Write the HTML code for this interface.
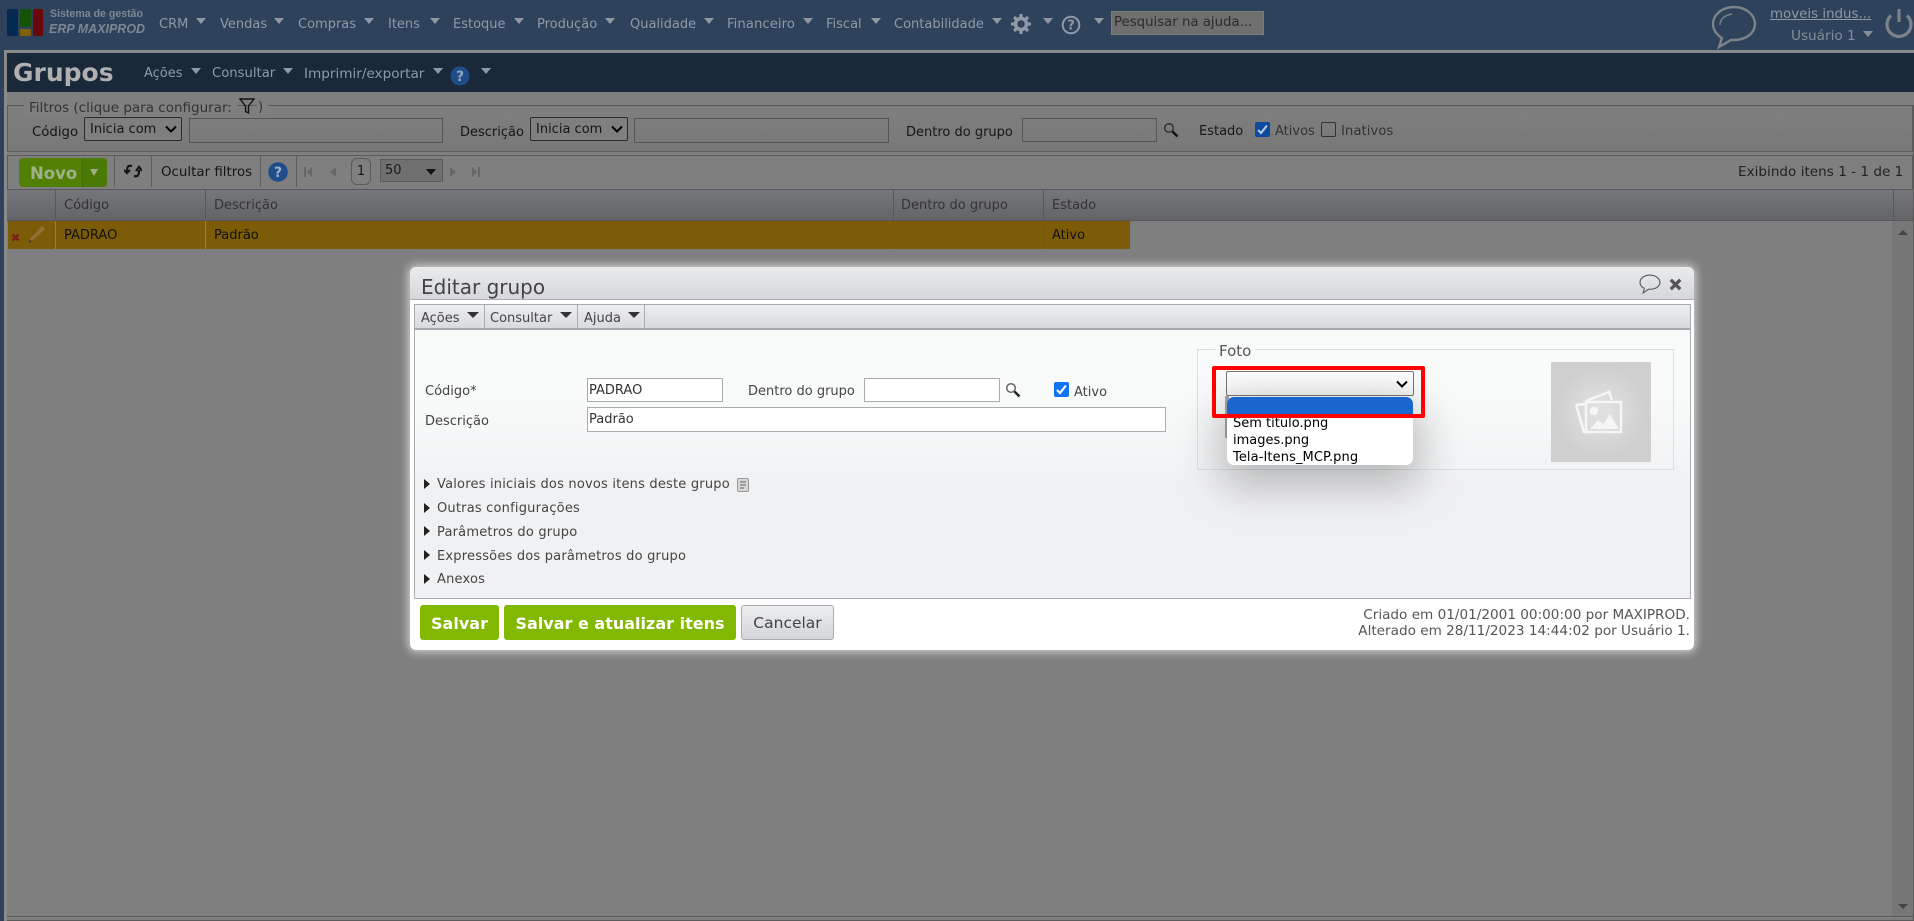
<!DOCTYPE html>
<html lang="pt-BR"><head><meta charset="utf-8"><title>Grupos</title>
<style>
html,body{margin:0;padding:0;width:1914px;height:921px;overflow:hidden;background:#7f7f7f;}
body{position:relative;font-family:"DejaVu Sans","Liberation Sans",sans-serif;font-size:13px;color:#161616;}
div,span,svg{position:absolute;}
.t{white-space:nowrap;line-height:18px;height:18px;margin-top:1px;}
.m{color:#8f99a5;font-size:13px;}
.a{width:0;height:0;border-left:5px solid transparent;border-right:5px solid transparent;border-top:6px solid #8f99a5;}
.d{width:0;height:0;border-left:6px solid transparent;border-right:6px solid transparent;border-top:6px solid #333;}
.box{box-sizing:border-box;border:1px solid #555;}
.sel{box-sizing:border-box;border:1px solid #2c2c2c;border-radius:2px;background:#7f7f7f;}
.sep{width:1px;background:#5e5e5e;}
.col{width:1px;background:#55585c;}
.di{box-sizing:border-box;border:1px solid #a9adb1;background:#fff;}
.dt{color:#444;}
.sec{letter-spacing:.2px;}
.ra{width:0;height:0;border-top:5px solid transparent;border-bottom:5px solid transparent;border-left:6px solid #222;}
.g{box-sizing:border-box;background:#82b900;border-radius:3px;color:#fff;font-weight:bold;font-size:16px;text-align:center;line-height:37px;}
</style></head>
<body>
<!-- top bar -->
<div style="left:0;top:0;width:1914px;height:50px;background:#2e425c"></div>
<div style="left:0;top:50px;width:4px;height:871px;background:#2e425c"></div>
<div style="left:4px;top:50px;width:1910px;height:3px;background:#8a8a8a"></div>
<div style="left:4px;top:50px;width:3px;height:871px;background:#8a8a8a"></div>
<div style="left:7px;top:9px;width:11px;height:27px;background:#042a52;border-radius:2px"></div>
<div style="left:20px;top:9px;width:11px;height:18px;background:#145205;border-radius:2px"></div>
<div style="left:20px;top:29px;width:11px;height:7px;background:#80600a;border-radius:1px"></div>
<div style="left:33px;top:9px;width:10px;height:27px;background:#690808;border-radius:2px"></div>
<div class="t" style="left:50px;top:4px;font:bold 10.6px/18px 'Liberation Sans',sans-serif;color:#7d8794">Sistema de gestão</div>
<div class="t" style="left:49px;top:19px;font:italic bold 12.5px/18px 'Liberation Sans',sans-serif;color:#7d8794">ERP MAXIPROD</div>
<div class="t m" style="left:159px;top:15px">CRM</div><div class="a" style="left:196px;top:18px"></div>
<div class="t m" style="left:220px;top:15px">Vendas</div><div class="a" style="left:274px;top:18px"></div>
<div class="t m" style="left:298px;top:15px">Compras</div><div class="a" style="left:364px;top:18px"></div>
<div class="t m" style="left:388px;top:15px">Itens</div><div class="a" style="left:430px;top:18px"></div>
<div class="t m" style="left:453px;top:15px">Estoque</div><div class="a" style="left:514px;top:18px"></div>
<div class="t m" style="left:537px;top:15px">Produção</div><div class="a" style="left:605px;top:18px"></div>
<div class="t m" style="left:630px;top:15px">Qualidade</div><div class="a" style="left:704px;top:18px"></div>
<div class="t m" style="left:727px;top:15px;font-size:13.3px">Financeiro</div><div class="a" style="left:803px;top:18px"></div>
<div class="t m" style="left:826px;top:15px">Fiscal</div><div class="a" style="left:871px;top:18px"></div>
<div class="t m" style="left:894px;top:15px">Contabilidade</div><div class="a" style="left:992px;top:18px"></div>
<svg style="left:1011px;top:14px" width="20" height="20" viewBox="0 0 20 20"><circle cx="10" cy="10" r="5.5" fill="none" stroke="#8f99a5" stroke-width="3.5"/><path d="M10 0v4M10 16v4M0 10h4M16 10h4M3 3l3 3M14 14l3 3M17 3l-3 3M6 14l-3 3" stroke="#8f99a5" stroke-width="3.2"/></svg>
<div class="a" style="left:1043px;top:18px"></div>
<svg style="left:1061px;top:15px" width="20" height="20" viewBox="0 0 20 20"><circle cx="10" cy="10" r="8.3" fill="none" stroke="#8f99a5" stroke-width="2"/><text x="10" y="14.5" font-size="13" font-weight="bold" text-anchor="middle" fill="#8f99a5" font-family="DejaVu Sans">?</text></svg>
<div class="a" style="left:1094px;top:18px"></div>
<div class="t" style="left:1111px;top:10px;width:153px;height:24px;box-sizing:border-box;background:#6f6f6f;border:1px solid #7c7c7c;color:#2e2a28;line-height:22px;padding-left:2px;font-size:13.3px">Pesquisar na ajuda...</div>
<svg style="left:1711px;top:5px" width="46" height="50" viewBox="0 0 46 50"><path d="M23 2C11 2 2 10 2 19c0 6 4 11 9 14l-3 9 12-7c1 0 2 0 3 0 12 0 21-7 21-16S35 2 23 2z" fill="none" stroke="#7d838a" stroke-width="2.4"/><path d="M9 20c0-6 5-10 12-11" fill="none" stroke="#7d838a" stroke-width="1.4"/></svg>
<div class="t m" style="left:1770px;top:5px;text-decoration:underline;font-size:13.4px">moveis indus...</div>
<div class="t m" style="left:1791px;top:26px;color:#858f9b;font-size:13.6px">Usuário 1</div><div class="a" style="left:1863px;top:31px;border-top-color:#858f9b"></div>
<svg style="left:1884px;top:8px" width="30" height="30" viewBox="0 0 30 30"><path d="M7 7.5a12 12 0 1 0 16 0" fill="none" stroke="#7d838a" stroke-width="3.2"/><path d="M15 1v13" stroke="#7d838a" stroke-width="3.2"/></svg>

<!-- title bar -->
<div style="left:7px;top:53px;width:1907px;height:39px;background:#19293a"></div>
<div class="t" style="left:13px;top:57px;height:30px;line-height:30px;font-size:25px;font-weight:bold;color:#b0b0b0">Grupos</div>
<div class="t m" style="left:144px;top:64px">Ações</div><div class="a" style="left:191px;top:68px"></div>
<div class="t m" style="left:212px;top:64px;font-size:13.2px">Consultar</div><div class="a" style="left:283px;top:68px"></div>
<div class="t m" style="left:304px;top:64px;font-size:13.6px">Imprimir/exportar</div><div class="a" style="left:433px;top:68px"></div>
<svg style="left:450px;top:66px" width="20" height="20" viewBox="0 0 20 20"><circle cx="10" cy="10" r="9.5" fill="#1f4d8a"/><text x="10" y="15" font-size="14" font-weight="bold" text-anchor="middle" fill="#8fa5c2" font-family="DejaVu Sans">?</text></svg>
<div class="a" style="left:481px;top:68px"></div>

<!-- filters -->
<div class="box" style="left:7px;top:105px;width:1906px;height:47px;border-color:#5b5b5b;background:linear-gradient(#7f7f7f,#787878)"></div>
<div class="t" style="left:24px;top:98px;background:#7f7f7f;padding:0 5px;color:#333;font-size:13.5px">Filtros (clique para configurar:</div>
<svg style="left:239px;top:98px" width="16" height="16" viewBox="0 0 16 16"><path d="M1 1h14L9.5 8v7l-3-1.500V8z" fill="none" stroke="#111" stroke-width="1.4"/></svg>
<div class="t" style="left:257px;top:98px;background:#7f7f7f;padding:0 5px 0 1px;color:#333">)</div>
<div class="t" style="left:32px;top:123px;font-size:13.3px">Código</div>
<div class="sel" style="left:84px;top:117px;width:98px;height:24px"></div>
<div class="t" style="left:90px;top:120px">Inicia com</div>
<svg style="left:164px;top:125px" width="14" height="9" viewBox="0 0 14 9"><path d="M2 1.500l5 5 5-5" fill="none" stroke="#000" stroke-width="2"/></svg>
<div class="box" style="left:189px;top:118px;width:254px;height:25px"></div>
<div class="t" style="left:460px;top:123px">Descrição</div>
<div class="sel" style="left:530px;top:117px;width:98px;height:24px"></div>
<div class="t" style="left:536px;top:120px">Inicia com</div>
<svg style="left:610px;top:125px" width="14" height="9" viewBox="0 0 14 9"><path d="M2 1.500l5 5 5-5" fill="none" stroke="#000" stroke-width="2"/></svg>
<div class="box" style="left:634px;top:118px;width:255px;height:25px"></div>
<div class="t" style="left:906px;top:123px">Dentro do grupo</div>
<div class="box" style="left:1022px;top:118px;width:135px;height:24px"></div>
<svg style="left:1163px;top:122px" width="16" height="16" viewBox="0 0 16 16"><circle cx="6" cy="6" r="4.300" fill="none" stroke="#333" stroke-width="1.500"/><path d="M9.500 9.500l5 5" stroke="#111" stroke-width="2.400"/></svg>
<div class="t" style="left:1199px;top:122px">Estado</div>
<div style="left:1255px;top:122px;width:15px;height:15px;background:#0b4a9c;border-radius:2px"></div>
<svg style="left:1255px;top:122px" width="15" height="15" viewBox="0 0 15 15"><path d="M3 8l3 3 6-7.500" fill="none" stroke="#b5c8de" stroke-width="2.200"/></svg>
<div class="t" style="left:1275px;top:122px;color:#333">Ativos</div>
<div style="left:1321px;top:122px;width:13px;height:13px;border:1px solid #333;border-radius:2px"></div>
<div class="t" style="left:1341px;top:122px;color:#333;font-size:13.3px">Inativos</div>

<!-- toolbar -->
<div class="box" style="left:7px;top:155px;width:1906px;height:35px;border-color:#5b5b5b;border-bottom:0"></div>
<div style="left:19px;top:158px;width:88px;height:29px;background:#528005;border-radius:4px"></div>
<div style="left:82px;top:158px;width:25px;height:29px;background:#4a7a06;border-left:1px solid #426d04;box-sizing:border-box;border-radius:0 4px 4px 0"></div>
<div class="t" style="left:30px;top:161px;height:24px;line-height:24px;font-size:16.5px;font-weight:bold;color:#a0b08c">Novo</div>
<div style="left:90px;top:169px;width:0;height:0;border-left:4px solid transparent;border-right:4px solid transparent;border-top:7px solid #a0b08c"></div>
<div class="sep" style="left:114px;top:156px;height:31px"></div>
<svg style="left:124px;top:163px" width="18" height="16" viewBox="0 0 18 16"><path d="M8 3C4 2 3 4 3 9M0 7l3 3 3-3M10 13c4 1 5-1 5-6M12 8l3-4 3 4" fill="none" stroke="#161616" stroke-width="2.200"/></svg>
<div class="sep" style="left:151px;top:156px;height:31px"></div>
<div class="t" style="left:161px;top:163px;font-size:13.4px">Ocultar filtros</div>
<div class="sep" style="left:260px;top:156px;height:31px"></div>
<svg style="left:268px;top:162px" width="20" height="20" viewBox="0 0 20 20"><circle cx="10" cy="10" r="9.800" fill="#1f4d8a"/><text x="10" y="15" font-size="14" font-weight="bold" text-anchor="middle" fill="#9db0c8" font-family="DejaVu Sans">?</text></svg>
<div class="sep" style="left:296px;top:156px;height:31px"></div>
<svg style="left:304px;top:166px" width="176" height="12" viewBox="0 0 176 12" fill="#666"><path d="M0 1h2v10H0zM8 1v10L3 6zM32 1v10l-6-5zM146 1v10l6-5zM168 1v10l5-5zM174 1h2v10h-2z"/></svg>
<div class="t" style="left:351px;top:157px;width:20px;height:27px;box-sizing:border-box;border:1px solid #5b5b5b;border-radius:6px;text-align:center;line-height:25px">1</div>
<div class="t" style="left:380px;top:158px;width:63px;height:23px;box-sizing:border-box;border:1px solid #5b5b5b;background:#707070;line-height:22px;padding-left:4px;color:#1a1a1a">50</div>
<div style="left:426px;top:169px;width:0;height:0;border-left:5px solid transparent;border-right:5px solid transparent;border-top:6px solid #111"></div>
<div class="t" style="left:1738px;top:162px;color:#222;font-size:13.6px">Exibindo itens 1 - 1 de 1</div>

<!-- grid -->
<div style="left:7px;top:189px;width:1906px;height:32px;background:linear-gradient(#75777a,#626467);border-top:1px solid #55585c;border-bottom:1px solid #55585c;box-sizing:border-box"></div>
<div class="col" style="left:55px;top:189px;height:60px"></div>
<div class="col" style="left:205px;top:189px;height:60px"></div>
<div class="col" style="left:893px;top:189px;height:60px"></div>
<div class="col" style="left:1043px;top:189px;height:60px"></div>
<div class="col" style="left:1893px;top:189px;height:32px"></div>
<div class="t" style="left:64px;top:196px;color:#333">Código</div>
<div class="t" style="left:214px;top:196px;color:#333">Descrição</div>
<div class="t" style="left:901px;top:196px;color:#333">Dentro do grupo</div>
<div class="t" style="left:1052px;top:196px;color:#333">Estado</div>
<div style="left:8px;top:221px;width:1122px;height:28px;background:#7d5c07"></div>
<div class="col" style="left:55px;top:221px;height:28px;background:#8a8060"></div>
<div class="col" style="left:205px;top:221px;height:28px;background:#8a8060"></div>
<div class="col" style="left:893px;top:221px;height:28px;background:#6d5a22"></div>
<div class="col" style="left:1043px;top:221px;height:28px;background:#6d5a22"></div>
<svg style="left:11px;top:233px" width="9" height="9" viewBox="0 0 9 9"><path d="M1.500 1.500l6 6M7.500 1.500l-6 6" stroke="#7a1f1a" stroke-width="2.400"/></svg>
<svg style="left:27px;top:225px" width="20" height="20" viewBox="0 0 20 20"><path d="M2 18l2-5L15 1l3 3L6 15z" fill="#97703a"/><path d="M2 18l1-3 2 1z" fill="#333"/></svg>
<div class="t" style="left:64px;top:226px;color:#111">PADRAO</div>
<div class="t" style="left:214px;top:226px;color:#111">Padrão</div>
<div class="t" style="left:1052px;top:226px;color:#111">Ativo</div>
<div style="left:1892px;top:221px;width:21px;height:695px;background:#777"></div>
<div style="left:1898px;top:230px;width:0;height:0;border-left:5px solid transparent;border-right:5px solid transparent;border-bottom:5px solid #444"></div>
<div style="left:1898px;top:904px;width:0;height:0;border-left:5px solid transparent;border-right:5px solid transparent;border-top:5px solid #444"></div>
<div style="left:7px;top:916px;width:1907px;height:1px;background:#5b5b5b"></div>
<div style="left:7px;top:920px;width:1907px;height:1px;background:#5b5b5b"></div>
<div style="left:1913px;top:105px;width:1px;height:816px;background:#5b5b5b"></div>

<!-- dialog -->
<div style="left:410px;top:267px;width:1284px;height:383px;background:#fff;border-radius:6px;box-shadow:0 0 9px 2px rgba(255,255,255,.65)"></div>
<div style="left:410px;top:267px;width:1284px;height:33px;box-sizing:border-box;background:linear-gradient(#e9ebed,#d5d7da);border-bottom:1px solid #a9adb3;border-radius:6px 6px 0 0"></div>
<div class="t" style="left:421px;top:273px;height:26px;line-height:26px;font-size:20px;color:#444">Editar grupo</div>
<svg style="left:1639px;top:274px" width="22" height="20" viewBox="0 0 21 19"><path d="M10.500 1C5 1 1 4 1 8c0 2.500 1.600 4.500 4 5.600L4 18l5-3.500h1.500C16 14.500 20 11.500 20 8s-4-7-9.500-7z" fill="none" stroke="#666" stroke-width="1.200"/></svg>
<svg style="left:1669px;top:278px" width="13" height="13" viewBox="0 0 11 11"><path d="M1.500 1.500l8 8M9.500 1.500l-8 8" stroke="#555" stroke-width="2.800"/></svg>
<!-- dialog body -->
<div style="left:414px;top:304px;width:1277px;height:295px;box-sizing:border-box;border:1px solid #a9adb3;background:linear-gradient(#f9fbfb 30%,#f0f1f3 62%)"></div>
<div style="left:415px;top:305px;width:1275px;height:25px;box-sizing:border-box;background:linear-gradient(#eceef0,#d8dadd);border-bottom:2px solid #a3a8ac"></div>
<div class="col" style="left:484px;top:305px;height:24px;background:#a9adb3"></div>
<div class="col" style="left:577px;top:305px;height:24px;background:#a9adb3"></div>
<div class="col" style="left:644px;top:305px;height:24px;background:#a9adb3"></div>
<div class="t dt" style="left:421px;top:309px">Ações</div><div class="d" style="left:467px;top:312px;border-top-color:#333"></div>
<div class="t dt" style="left:490px;top:309px">Consultar</div><div class="d" style="left:560px;top:312px"></div>
<div class="t dt" style="left:584px;top:309px">Ajuda</div><div class="d" style="left:628px;top:312px"></div>

<div class="t dt" style="left:425px;top:382px">Código*</div>
<div class="di t" style="left:587px;top:378px;width:136px;height:24px;line-height:24px;padding-left:1px;color:#333;margin-top:0">PADRAO</div>
<div class="t dt" style="left:748px;top:382px">Dentro do grupo</div>
<div class="di" style="left:864px;top:378px;width:136px;height:24px"></div>
<svg style="left:1005px;top:382px" width="16" height="16" viewBox="0 0 16 16"><circle cx="6" cy="6" r="4.300" fill="#fff" stroke="#666" stroke-width="1.500"/><path d="M9.500 9.500l5 5" stroke="#222" stroke-width="2.400"/></svg>
<div style="left:1054px;top:382px;width:15px;height:15px;background:#0f74f2;border-radius:2px"></div>
<svg style="left:1054px;top:382px" width="15" height="15" viewBox="0 0 15 15"><path d="M3 8l3 3 6-7.500" fill="none" stroke="#fff" stroke-width="2.200"/></svg>
<div class="t dt" style="left:1074px;top:383px">Ativo</div>
<div class="t dt" style="left:425px;top:412px">Descrição</div>
<div class="di t" style="left:587px;top:407px;width:579px;height:25px;line-height:23px;padding-left:1px;color:#333;margin-top:0">Padrão</div>

<div class="ra" style="left:424px;top:479px"></div><div class="t dt sec" style="left:437px;top:475px">Valores iniciais dos novos itens deste grupo</div>
<svg style="left:737px;top:478px" width="12" height="14" viewBox="0 0 12 14"><rect x=".5" y=".5" width="11" height="13" rx="1.500" fill="#d5d6d8" stroke="#999"/><path d="M3 4h6M3 7h6M3 10h4" stroke="#666"/></svg>
<div class="ra" style="left:424px;top:503px"></div><div class="t dt sec" style="left:437px;top:499px">Outras configurações</div>
<div class="ra" style="left:424px;top:526px"></div><div class="t dt sec" style="left:437px;top:523px">Parâmetros do grupo</div>
<div class="ra" style="left:424px;top:550px"></div><div class="t dt sec" style="left:437px;top:547px">Expressões dos parâmetros do grupo</div>
<div class="ra" style="left:424px;top:574px"></div><div class="t dt sec" style="left:437px;top:570px">Anexos</div>

<!-- foto -->
<div style="left:1197px;top:349px;width:477px;height:121px;box-sizing:border-box;border:1px solid #dcdfe0"></div>
<div class="t" style="left:1215px;top:341px;background:#f8fafa;padding:0 4px;font-size:15px;color:#555">Foto</div>
<div style="left:1551px;top:362px;width:100px;height:100px;background:radial-gradient(circle,#e0e0e0 10%,#cfcfcf 65%)"></div>
<svg style="left:1573px;top:389px" width="50" height="46" viewBox="0 0 50 46" fill="none" stroke="#f6f6f6" stroke-width="2.500"><path d="M13 12L36 3l3 8M3 16l8 27h5"/><path d="M13 15l-10 1"/><rect x="13" y="13" width="35" height="30"/><circle cx="21" cy="22" r="3" fill="#f6f6f6"/><path d="M17 40l8-9 5 4 7-10 9 15z" fill="#f6f6f6" stroke="none"/></svg>

<div style="left:1225px;top:396px;width:4px;height:42px;background:#a8a8a8"></div>
<div style="left:1226px;top:371px;width:188px;height:25px;box-sizing:border-box;border:1px solid #777;background:linear-gradient(#fff,#f4f4f4);border-radius:2px"></div>
<svg style="left:1395px;top:380px" width="14" height="9" viewBox="0 0 14 9"><path d="M2 1.500l5 5 5-5" fill="none" stroke="#000" stroke-width="2"/></svg>
<div style="left:1227px;top:397px;width:186px;height:68px;background:#fff;border-radius:7px;box-shadow:0 14px 44px 6px rgba(0,0,0,.26);overflow:hidden">
<div style="left:0;top:0;width:186px;height:20px;background:#1a66cf"></div>
<div class="t" style="left:6px;top:17px;color:#000">Sem título.png</div>
<div class="t" style="left:6px;top:34px;color:#000">images.png</div>
<div class="t" style="left:6px;top:51px;color:#000;letter-spacing:.1px">Tela-Itens_MCP.png</div>
</div>
<div style="left:1212px;top:366px;width:213px;height:52px;box-sizing:border-box;border:4px solid #f00;border-radius:2px"></div>

<!-- footer -->
<div class="g" style="left:420px;top:605px;width:79px;height:35px">Salvar</div>
<div class="g" style="left:504px;top:605px;width:232px;height:35px">Salvar e atualizar itens</div>
<div style="left:741px;top:605px;width:93px;height:35px;box-sizing:border-box;border:1px solid #a9adb3;border-radius:3px;background:linear-gradient(#eceef0,#d3d5d9);color:#444;font-size:15.5px;text-align:center;line-height:35px">Cancelar</div>
<div class="t" style="left:1290px;width:400px;top:605px;text-align:right;color:#555;font-size:13.6px">Criado em 01/01/2001 00:00:00 por MAXIPROD.</div>
<div class="t" style="left:1290px;width:400px;top:621px;text-align:right;color:#555;font-size:13.6px">Alterado em 28/11/2023 14:44:02 por Usuário 1.</div>
</body></html>
